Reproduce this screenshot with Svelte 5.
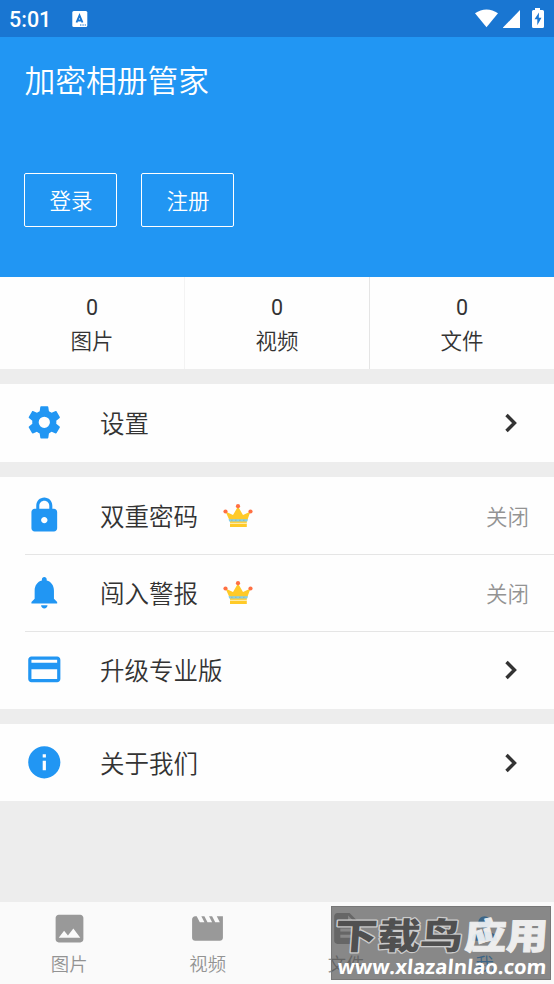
<script>
  const stats = ['图片', '视频', '文件'];
  const groups = [
    [{ icon: 'settings', label: '设置' }],
    [
      { icon: 'lock', label: '双重密码', pro: true },
      { icon: 'bell', label: '闯入警报', pro: true },
      { icon: 'card', label: '升级专业版' }
    ],
    [{ icon: 'info', label: '关于我们' }]
  ];
  const tabs = [
    { icon: 'image', label: '图片' },
    { icon: 'movie', label: '视频' },
    { icon: 'file', label: '文件' },
    { icon: 'person', label: '我', active: true }
  ];
  const paths = {
    settings: 'M19.43 12.98c.04-.32.07-.64.07-.98s-.03-.66-.07-.98l2.11-1.65c.19-.15.24-.42.12-.64l-2-3.46c-.12-.22-.39-.3-.61-.22l-2.49 1c-.52-.4-1.08-.73-1.69-.98l-.38-2.65C14.46 2.18 14.25 2 14 2h-4c-.25 0-.46.18-.49.42l-.38 2.65c-.61.25-1.17.59-1.69.98l-2.49-1c-.23-.09-.49 0-.61.22l-2 3.46c-.13.22-.07.49.12.64l2.11 1.65c-.04.32-.07.65-.07.98s.03.66.07.98l-2.11 1.65c-.19.15-.24.42-.12.64l2 3.46c.12.22.39.3.61.22l2.49-1c.52.4 1.08.73 1.69.98l.38 2.65c.03.24.24.42.49.42h4c.25 0 .46-.18.49-.42l.38-2.65c.61-.25 1.17-.59 1.69-.98l2.49 1c.23.09.49 0 .61-.22l2-3.46c.12-.22.07-.49-.12-.64zM12 15.5a3.5 3.5 0 1 1 0-7 3.5 3.5 0 0 1 0 7z',
    lock: 'M18 8h-1V6c0-2.76-2.24-5-5-5S7 3.24 7 6v2H6c-1.1 0-2 .9-2 2v10c0 1.1.9 2 2 2h12c1.1 0 2-.9 2-2V10c0-1.1-.9-2-2-2zm-6 9c-1.1 0-2-.9-2-2s.9-2 2-2 2 .9 2 2-.9 2-2 2zm3.1-9H8.9V6c0-1.71 1.39-3.1 3.1-3.1s3.1 1.39 3.1 3.1z',
    bell: 'M12 22c1.1 0 2-.9 2-2h-4c0 1.1.9 2 2 2zm6-6v-5c0-3.07-1.63-5.64-4.5-6.32V4c0-.83-.67-1.5-1.5-1.5s-1.5.67-1.5 1.5v.68C7.64 5.36 6 7.92 6 11v5l-2 2v1h16v-1z',
    card: 'M20 4H4c-1.11 0-1.99.89-1.99 2L2 18c0 1.11.89 2 2 2h16c1.11 0 2-.89 2-2V6c0-1.11-.89-2-2-2zm0 14H4v-6h16zm0-10H4V6h16z',
    info: 'M12 2C6.48 2 2 6.48 2 12s4.48 10 10 10 10-4.48 10-10S17.52 2 12 2zm1 15h-2v-6h2zm0-8h-2V7h2z',
    image: 'M21 19V5c0-1.1-.9-2-2-2H5c-1.1 0-2 .9-2 2v14c0 1.1.9 2 2 2h14c1.1 0 2-.9 2-2zM8.5 13.5l2.5 3.01L14.5 12l4.5 6H5z',
    movie: 'M18 4l2 4h-3l-2-4h-2l2 4h-3l-2-4H8l2 4H7L5 4H4c-1.1 0-1.99.9-1.99 2L2 18c0 1.1.9 2 2 2h16c1.1 0 2-.9 2-2V4z',
    file: 'M14 2H6c-1.1 0-1.99.9-1.99 2L4 20c0 1.1.89 2 1.99 2H18c1.1 0 2-.9 2-2V8zm2 16H8v-2h8zm0-4H8v-2h8zm-3-5V3.5L18.5 9z',
    person: 'M12 12c2.21 0 4-1.79 4-4s-1.79-4-4-4-4 1.79-4 4 1.79 4 4 4zm0 2c-2.67 0-8 1.34-8 4v2h16v-2c0-2.66-5.33-4-8-4z'
  };
</script>

{#snippet icon(name)}
  <svg class="icon" viewBox="0 0 24 24"><path d={paths[name]} /></svg>
{/snippet}

<div class="app">
  <div class="status">
    <span class="time">5:01</span>
    <svg class="ime" width="16" height="16" viewBox="0 0 16 16">
      <rect width="15" height="16" x=".3" rx="1.5" fill="#fff" />
      <path d="M4.500 11.500 7.500 4.500 10.500 11.500M5.700 9.500h3.600" fill="none" stroke="#1976d2" stroke-width="1.900" />
      <path d="M8 14h1.400M10.400 14h1.400M12.700 14h1.300" stroke="#1976d2" stroke-width="1.200" />
    </svg>
    <svg class="signals" width="72" height="22" viewBox="0 0 72 22" fill="#fff">
      <path d="M3 5.200C10 .1 19 .1 26 5.200L14.500 19.200z" />
      <path d="M31 20V19.600L48 2v18z" />
      <path fill-rule="evenodd" d="M63 2V0h5v2h2.500q1.500 0 1.500 1.500v15q0 1.500-1.500 1.500h-9q-1.500 0-1.500-1.500v-15q0-1.500 1.500-1.500zM67 4.500l-4.500 6.700h2.800v6l4.200-7.500h-2.700z" />
    </svg>
  </div>

  <header>
    <h1>加密相册管家</h1>
    <div class="buttons">
      <button>登录</button>
      <button>注册</button>
    </div>
  </header>

  <div class="stats">
    {#each stats as label}
      <div class="stat"><span class="count">0</span><span>{label}</span></div>
    {/each}
  </div>

  {#each groups as rows}
    <section>
      {#each rows as row}
        <div class="row">
          {@render icon(row.icon)}
          <span class="label">{row.label}</span>
          {#if row.pro}
            <svg class="crown" width="30" height="24" viewBox="0 0 30 24">
              <path d="M2.500 7.500 10 11 15 2.500 20 11 27.500 7.500 23.800 17.500V23H7v-5.500z" fill="#ffca28" />
              <path d="M5.500 15.300h19.500l-.8 2.200H6.300z" fill="#81cfee" />
              <path d="M7 19.300h17" stroke="#fff3c4" stroke-width="1" />
              <path d="M8 16.300h14.500" stroke="#b5a66c" stroke-width=".6" stroke-dasharray="1.500 2.500" />
              <g fill="#ff7043"><circle cx="2.500" cy="7.500" r="2.100" /><circle cx="15" cy="2.200" r="2.100" /><circle cx="27.500" cy="7.500" r="2.100" /></g>
            </svg>
            <span class="state">关闭</span>
          {:else}
            <svg class="chevron" width="14" height="20" viewBox="0 0 14 20"><path d="M2.500 2 10.500 10 2.500 18" /></svg>
          {/if}
        </div>
      {/each}
    </section>
  {/each}

  <nav>
    {#each tabs as tab}
      <div class="tab" class:active={tab.active}>{@render icon(tab.icon)}<span>{tab.label}</span></div>
    {/each}
  </nav>

  <div class="watermark">
    <svg width="220" height="74" viewBox="0 0 220 74">
      <g class="brand" font-size="36">
        <text class="dark" transform="translate(3 43) skewX(-4)" textLength="128" lengthAdjust="spacingAndGlyphs">下载鸟</text>
        <text class="light" transform="translate(133 43) skewX(-4)" textLength="83" lengthAdjust="spacingAndGlyphs">应用</text>
      </g>
      <text class="url" transform="translate(6 67.5) skewX(-5)" textLength="209" lengthAdjust="spacingAndGlyphs">www.xlazalnlao.com</text>
    </svg>
  </div>
</div>

<style>
  :global(body) { margin: 0; }
  .app {
    position: relative;
    display: flex;
    flex-direction: column;
    width: 554px;
    height: 984px;
    overflow: hidden;
    background: #ededed;
    color: #333;
    font-family: Roboto, "Noto Sans CJK SC", sans-serif;
    font-weight: 350;
  }
  .status {
    display: flex;
    align-items: center;
    box-sizing: border-box;
    height: 37px;
    flex: none;
    padding: 0 10px 0 9px;
    background: #1976d2;
    color: #fff;
  }
  .time { width: 63px; font-size: 21.5px; font-weight: 500; line-height: 37px; padding-top: 1px; }
  .signals { margin-left: auto; }
  header {
    box-sizing: border-box;
    height: 240px;
    flex: none;
    padding: 22px 24.4px 0;
    background: #2196f3;
    color: #fff;
  }
  h1 { margin: 0; font-size: 30.8px; line-height: 46px; font-weight: 350; }
  .buttons { display: flex; gap: 24px; margin-top: 67.5px; }
  button {
    box-sizing: border-box;
    width: 93px;
    height: 54px;
    padding: 3px 0 0;
    border: 1.500px solid #fff;
    border-radius: 2px;
    background: none;
    color: #fff;
    font: 350 21.5px/50px Roboto, "Noto Sans CJK SC", sans-serif;
  }
  .stats { display: flex; height: 92px; flex: none; background: #fefefe; }
  .stat {
    display: flex;
    flex: 1;
    flex-direction: column;
    align-items: center;
    padding-top: 14px;
    font-size: 21.5px;
    line-height: 34px;
  }
  .count { font-weight: 400; }
  .stat + .stat { border-left: 1px solid #e5e5e5; }
  .stat:nth-child(2) { border-left-color: #f3f3f3; }
  section { margin-top: 15.4px; flex: none; background: #fefefe; }
  .row {
    position: relative;
    display: flex;
    align-items: center;
    box-sizing: border-box;
    height: 77.200px;
    padding: 0 25px 0 24.5px;
  }
  .row + .row::before {
    content: "";
    position: absolute;
    top: 0;
    left: 25px;
    right: 0;
    border-top: 1px solid #e5e5e5;
  }
  .row .icon { width: 38.6px; height: 38.6px; margin: -.5px 0 0 0; fill: #2196f3; }
  .label { margin-left: 37px; padding-top: 4.500px; font-size: 24.5px; line-height: 36px; }
  .crown { margin-left: 25.4px; }
  .state { margin-left: auto; padding-top: 4px; color: #939393; font-size: 21.5px; line-height: 32px; }
  .chevron { margin: 0 11px 0 auto; fill: none; stroke: #333; stroke-width: 3.4; }
  nav { display: flex; height: 82px; flex: none; margin-top: auto; background: #fafafa; }
  .tab {
    display: flex;
    flex: 1;
    flex-direction: column;
    align-items: center;
    box-sizing: border-box;
    padding-top: 8px;
    color: #939393;
    font-size: 18.4px;
    line-height: 28px;
  }
  .tab .icon { width: 37px; height: 37px; flex: none; fill: #999; }
  .tab span { margin-top: 4px; }
  .tab.active { color: #2196f3; }
  .tab.active .icon { fill: #2196f3; }
  .watermark {
    position: absolute;
    left: 331px;
    top: 906px;
    width: 220px;
    height: 74px;
    background: rgba(75, 75, 75, .65);
    box-shadow: inset 0 0 0 1px #777;
  }
  .watermark svg { display: block; }
  .brand { font-family: "Noto Sans CJK SC", sans-serif; font-weight: 900; paint-order: stroke; stroke-linejoin: round; }
  .dark { fill: #505050; stroke: #ccc; stroke-width: 2.500px; }
  .light { fill: #fff; stroke: #fff; stroke-width: 1px; opacity: .85; }
  .url { fill: #fff; font: 700 20px "Open Sans", "Noto Sans", sans-serif; }
</style>
